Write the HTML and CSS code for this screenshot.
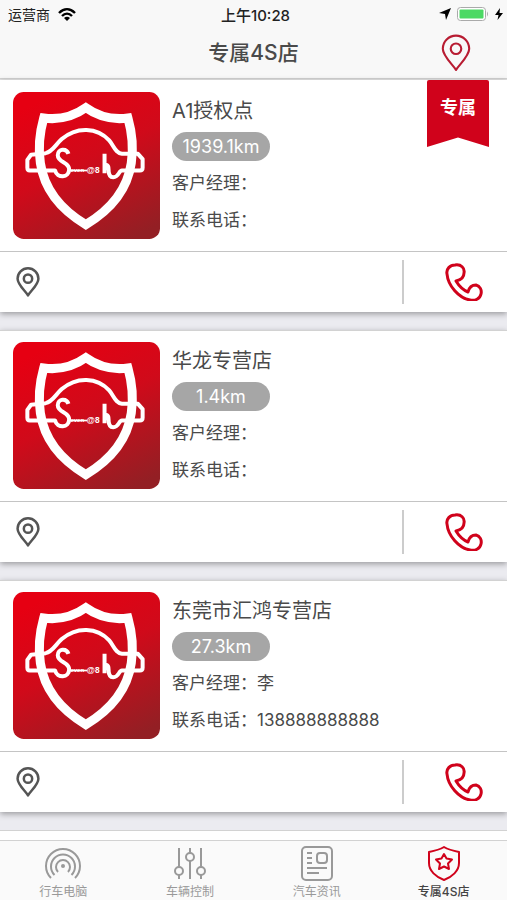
FILE: index.html
```html
<!DOCTYPE html>
<html lang="zh-CN">
<head>
<meta charset="UTF-8">
<meta name="viewport" content="width=device-width, initial-scale=1.0">
<title>专属4S店</title>
<link rel="stylesheet" href="styles.css">
</head>
<body>
    <!-- shared icons -->
    <svg class="sprite" aria-hidden="true">
        <defs>
            <linearGradient id="logoRed" x1="0.3" y1="0" x2="0.8" y2="1">
                <stop offset="0" stop-color="#e60012"/>
                <stop offset="0.45" stop-color="#d00a1a"/>
                <stop offset="1" stop-color="#931f24"/>
            </linearGradient>
        </defs>
        <symbol id="logo" viewBox="40 33 440 440">
            <rect x="40" y="33" width="440" height="440" rx="32" fill="url(#logoRed)"/>
            <g fill="none" stroke="#fff">
                <path stroke-width="27" d="M258 80 Q203 120 132 111 Q112 182 122 246 C134 328 188 388 258 430 C328 388 382 328 394 246 Q404 182 384 111 Q313 120 258 80 Z"/>
                <path stroke-width="12" stroke-linejoin="round" d="M206 218 C200 200 174 202 174 222 C174 244 208 242 208 264 C208 292 172 292 166 268 L90 268 Q83 268 83 260 L83 236 L94 221 L138 216 C158 212 166 192 186 174 C230 136 292 138 328 178 C342 194 346 216 366 218 L414 218 L428 234 L428 260 Q428 268 420 268 L366 268 C356 268 358 288 340 288 C328 288 326 278 326 264 C326 248 314 248 314 258 M314 218 V276"/>
                <path stroke-width="5" d="M204 268 H262"/>
            </g>
            <text x="212" y="273" font-size="18" font-weight="700" fill="#fff" font-family="Liberation Sans, sans-serif">even</text>
            <text x="261" y="274" font-size="25" font-weight="700" fill="#fff" font-family="Liberation Sans, sans-serif">@8</text>
        </symbol>
        <symbol id="pin" viewBox="0 0 28 36">
            <path d="M14 34 C11 29 1.500 21 1.500 14 A12.500 12.500 0 0 1 26.500 14 C26.500 21 17 29 14 34 Z"/>
            <circle cx="14" cy="14" r="5"/>
        </symbol>
        <symbol id="phone" viewBox="0 0 38 38">
            <path d="M2 11 C1 6 5 2 10 2 C16 1 20 5 19 10 C19 14 16 17 11 18 C14 23 18 27 23 29 C24 25 27 22 31 22 C35 23 37 27 36 31 C35 36 30 38 25 37 C14 35 3 23 2 11 Z"/>
        </symbol>
    </svg>

    <div class="app">
        <header class="header">
            <div class="status">
                <div class="status-side">
                    <span>运营商</span>
                    <svg width="18" height="13" viewBox="0 0 18 13">
                        <path d="M1 5 C6 0 12 0 17 5 M4 8 C7 5 11 5 14 8" fill="none" stroke="#000" stroke-width="2.400"/>
                        <path d="M6 10 Q9 7.500 12 10 L9 13 Z"/>
                    </svg>
                </div>
                <span class="clock">上午10:28</span>
                <div class="status-side status-right">
                    <svg width="12" height="12" viewBox="0 0 12 12"><path d="M12 0 L7 12 L6 6 L0 5 Z"/></svg>
                    <svg width="32" height="14" viewBox="0 0 32 14">
                        <rect x="0.500" y="0.500" width="28" height="13" rx="3" fill="#fff" stroke="#aaa"/>
                        <rect x="2.500" y="2.500" width="24" height="9" rx="1" fill="#4cd964"/>
                        <path d="M30 4.500 Q32 7 30 9.500 Z" fill="#aaa"/>
                    </svg>
                    <svg width="8" height="12" viewBox="0 0 8 12"><path d="M5 0 L0 7 H3.500 L2.500 12 L8 5 H4.500 Z"/></svg>
                </div>
            </div>
            <div class="title-bar">
                <h1>专属4S店</h1>
                <button class="icon-btn map-btn" type="button" aria-label="地图">
                    <svg class="line-icon" width="30" height="38"><use href="#pin"/></svg>
                </button>
            </div>
        </header>

        <main class="shops">
            <article class="card">
                <div class="info">
                    <svg class="logo"><use href="#logo"/></svg>
                    <div class="detail">
                        <h2>A1授权点</h2>
                        <span class="distance">1939.1km</span>
                        <p>客户经理：</p>
                        <p>联系电话：</p>
                    </div>
                    <span class="ribbon">专属</span>
                </div>
                <div class="actions">
                    <button class="icon-btn place-btn" type="button" aria-label="位置">
                        <svg class="line-icon" width="24" height="30"><use href="#pin"/></svg>
                    </button>
                    <button class="icon-btn call-btn" type="button" aria-label="拨打电话">
                        <svg class="line-icon" width="38" height="38"><use href="#phone"/></svg>
                    </button>
                </div>
            </article>

            <article class="card">
                <div class="info">
                    <svg class="logo"><use href="#logo"/></svg>
                    <div class="detail">
                        <h2>华龙专营店</h2>
                        <span class="distance">1.4km</span>
                        <p>客户经理：</p>
                        <p>联系电话：</p>
                    </div>
                </div>
                <div class="actions">
                    <button class="icon-btn place-btn" type="button" aria-label="位置">
                        <svg class="line-icon" width="24" height="30"><use href="#pin"/></svg>
                    </button>
                    <button class="icon-btn call-btn" type="button" aria-label="拨打电话">
                        <svg class="line-icon" width="38" height="38"><use href="#phone"/></svg>
                    </button>
                </div>
            </article>

            <article class="card">
                <div class="info">
                    <svg class="logo"><use href="#logo"/></svg>
                    <div class="detail">
                        <h2>东莞市汇鸿专营店</h2>
                        <span class="distance">27.3km</span>
                        <p>客户经理：李</p>
                        <p>联系电话：138888888888</p>
                    </div>
                </div>
                <div class="actions">
                    <button class="icon-btn place-btn" type="button" aria-label="位置">
                        <svg class="line-icon" width="24" height="30"><use href="#pin"/></svg>
                    </button>
                    <button class="icon-btn call-btn" type="button" aria-label="拨打电话">
                        <svg class="line-icon" width="38" height="38"><use href="#phone"/></svg>
                    </button>
                </div>
            </article>

            <article class="card card-next"></article>
        </main>

        <nav class="tabs">
            <a href="#">
                <svg class="line-icon" width="38" height="36" viewBox="0 0 38 36">
                    <path d="M7 32 A17 17 0 1 1 31 32 M10.500 29 A12 12 0 1 1 27.500 29 M14 26 A7 7 0 1 1 24 26"/>
                    <circle cx="19" cy="20" r="2" fill="currentColor" stroke="none"/>
                </svg>
                <span>行车电脑</span>
            </a>
            <a href="#">
                <svg class="line-icon" width="38" height="36" viewBox="0 0 38 36">
                    <path d="M8 2 V21 M8 29 V33 M19 2 V7 M19 15 V33 M30 2 V21 M30 29 V33"/>
                    <circle cx="8" cy="25" r="4"/>
                    <circle cx="19" cy="11" r="4"/>
                    <circle cx="30" cy="25" r="4"/>
                </svg>
                <span>车辆控制</span>
            </a>
            <a href="#">
                <svg class="line-icon" width="38" height="36" viewBox="0 0 38 36">
                    <rect x="4" y="1" width="30" height="33" rx="4"/>
                    <rect x="19" y="7" width="10" height="10" rx="3"/>
                    <path d="M9 7 H14 M9 12 H14 M9 17 H14 M9 22 H29 M9 27 H21"/>
                </svg>
                <span>汽车资讯</span>
            </a>
            <a href="#" class="active">
                <svg class="line-icon" width="38" height="36" viewBox="0 0 38 36">
                    <path d="M19 1 C14 4 9 5 4 6 V17 C4 25 11 31 19 34 C27 31 34 25 34 17 V6 C29 5 24 4 19 1 Z"/>
                    <path d="M19 8 L21.500 12.500 L27 13.500 L23 17.500 L24 23 L19 20.500 L14 23 L15 17.500 L11 13.500 L16.500 12.500 Z"/>
                </svg>
                <span>专属4S店</span>
            </a>
        </nav>
    </div>
</body>
</html>
```

FILE: styles.css
```css
* {
    box-sizing: border-box;
}
body {
    margin: 0;
    font-family: Inter, "Noto Sans CJK SC", sans-serif;
    background-color: #ebebf0;
    color: #4a4a4a;
}
h1, h2, p {
    margin: 0;
    font-weight: 400;
}
.sprite {
    position: absolute;
    width: 0;
    height: 0;
    overflow: visible;
}
.app {
    display: flex;
    flex-direction: column;
    height: 100vh;
}

/* header */
.header {
    background-color: #f8f8f8;
    border-bottom: 1px solid #d2d2d2;
}
.status {
    display: grid;
    grid-template-columns: 1fr auto 1fr;
    align-items: center;
    height: 28px;
    padding: 0 4px 0 8px;
    font-size: 14px;
    color: #222;
}
.status-side {
    display: flex;
    align-items: center;
    gap: 8px;
}
.status-right {
    justify-content: flex-end;
    gap: 6px;
}
.clock {
    font-size: 15px;
    font-weight: 500;
}
.title-bar {
    display: grid;
    grid-template-columns: 1fr auto 1fr;
    align-items: center;
    height: 50px;
    padding: 0 36px;
}
.title-bar h1 {
    grid-column: 2;
    font-size: 21px;
    line-height: 28px;
    font-weight: 500;
}
.icon-btn {
    display: flex;
    align-items: center;
    padding: 0;
    border: none;
    background: none;
    cursor: pointer;
}
.line-icon {
    fill: none;
    stroke: currentColor;
    stroke-width: 2;
    stroke-linejoin: round;
}
.map-btn {
    justify-self: end;
    color: #b81c32;
}

/* shop list */
.shops {
    display: flex;
    flex: 1;
    flex-direction: column;
    gap: 18px;
    min-height: 0;
    border-top: 1px solid #e4e4e4;
}
.card {
    background-color: #fff;
    border-top: 1px solid #d2d2d2;
    box-shadow: 0 2px 6px rgba(0, 0, 0, 0.35);
}
.card:first-child {
    border-top-color: #fff;
}
.card-next {
    flex: 1;
    box-shadow: none;
}
.info {
    display: flex;
    gap: 12px;
    height: 170px;
    padding: 11px 18px 0 13px;
}
.logo {
    width: 147px;
    height: 147px;
}
.detail {
    flex: 1;
    padding-top: 5px;
}
.detail h2 {
    font-size: 20px;
    line-height: 28px;
}
.distance {
    display: block;
    width: 98px;
    margin: 7px 0 4px;
    border-radius: 15px;
    background-color: #a6a6a6;
    color: #fff;
    font-size: 18px;
    line-height: 29px;
    text-align: center;
}
.detail p {
    font-size: 17px;
    line-height: 37px;
}
.ribbon {
    align-self: flex-start;
    width: 62px;
    height: 67px;
    margin-top: -12px;
    border-radius: 2px 2px 0 0;
    background-color: #d0021b;
    clip-path: polygon(0 0, 100% 0, 100% 100%, 50% 86%, 0 100%);
    color: #fff;
    font-size: 18px;
    font-weight: 700;
    line-height: 56px;
    text-align: center;
}
.actions {
    display: flex;
    align-items: center;
    height: 61px;
    border-top: 1px solid #c4c4c4;
}
.place-btn {
    flex: 1;
    padding-left: 16px;
    color: #555;
}
.place-btn .line-icon {
    stroke-width: 3;
}
.call-btn {
    justify-content: center;
    width: 105px;
    height: 44px;
    padding-left: 16px;
    border-left: 2px solid #ccc;
    color: #d0021b;
}
.call-btn .line-icon {
    stroke-width: 3;
}

/* bottom tabs */
.tabs {
    display: grid;
    grid-template-columns: repeat(4, 1fr);
    height: 60px;
    background-color: #fafafa;
    border-top: 1px solid #d2d2d2;
}
.tabs a {
    display: flex;
    flex-direction: column;
    align-items: center;
    padding-top: 5px;
    color: #999;
    font-size: 12px;
    line-height: 20px;
    text-decoration: none;
}
.tabs .active {
    color: #d0021b;
}
.tabs .active span {
    color: #444;
    font-weight: 500;
}
```
